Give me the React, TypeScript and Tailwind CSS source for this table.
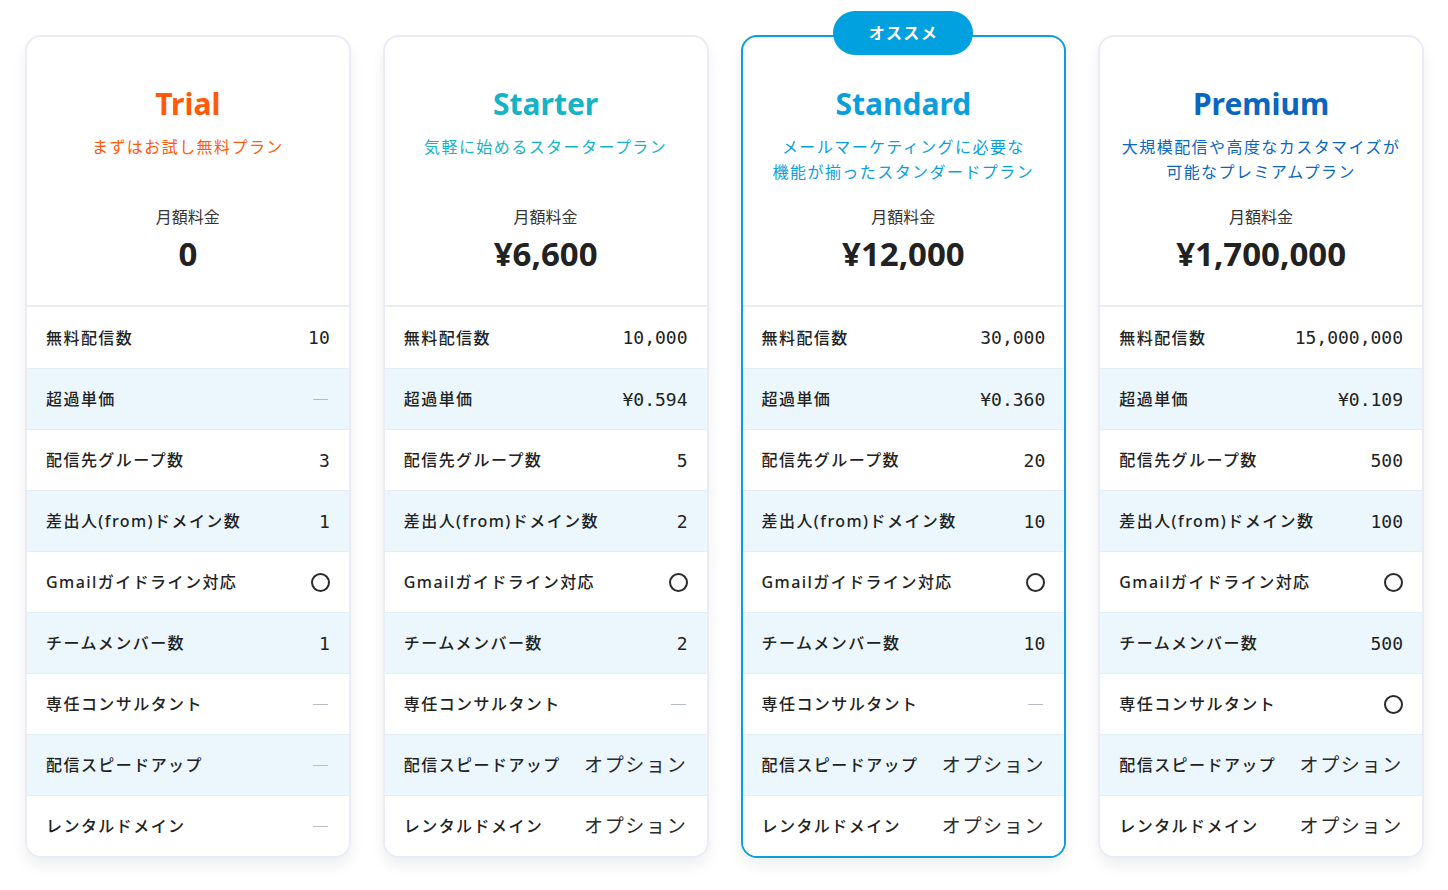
import React from "react";

type Value = string | "dash" | "circle" | "option";

type Plan = {
  name: string;
  color: string;
  subtitle: string[];
  price: string;
  featured?: boolean;
  values: Value[];
};

const labels = [
  "無料配信数",
  "超過単価",
  "配信先グループ数",
  "差出人(from)ドメイン数",
  "Gmailガイドライン対応",
  "チームメンバー数",
  "専任コンサルタント",
  "配信スピードアップ",
  "レンタルドメイン",
];

const plans: Plan[] = [
  {
    name: "Trial",
    color: "text-[#ff5a0a]",
    subtitle: ["まずはお試し無料プラン"],
    price: "0",
    values: ["10", "dash", "3", "1", "circle", "1", "dash", "dash", "dash"],
  },
  {
    name: "Starter",
    color: "text-[#16b2c6]",
    subtitle: ["気軽に始めるスタータープラン"],
    price: "¥6,600",
    values: ["10,000", "¥0.594", "5", "2", "circle", "2", "dash", "option", "option"],
  },
  {
    name: "Standard",
    color: "text-[#0a9fdc]",
    subtitle: ["メールマーケティングに必要な", "機能が揃ったスタンダードプラン"],
    price: "¥12,000",
    featured: true,
    values: ["30,000", "¥0.360", "20", "10", "circle", "10", "dash", "option", "option"],
  },
  {
    name: "Premium",
    color: "text-[#0a66bf]",
    subtitle: ["大規模配信や高度なカスタマイズが", "可能なプレミアムプラン"],
    price: "¥1,700,000",
    values: ["15,000,000", "¥0.109", "500", "100", "circle", "500", "circle", "option", "option"],
  },
];

function Cell({ value }: { value: Value }) {
  if (value === "dash") {
    return <span className="mr-[2px] block h-px w-[15px] bg-[#b8bcc6]" />;
  }
  if (value === "circle") {
    return <span className="block h-[19px] w-[19px] rounded-full border-[2px] border-[#2a2a2a]" />;
  }
  if (value === "option") {
    return <span className="text-[19px] tracking-[0.09em] text-[#2a2a2a]">オプション</span>;
  }
  return (
    <span className="font-['DejaVu_Sans_Mono','Liberation_Mono',monospace] text-[18px] text-[#222]">
      {value}
    </span>
  );
}

function PlanCard({ plan }: { plan: Plan }) {
  return (
    <div className="relative">
      {plan.featured && (
        <div className="absolute -top-[24px] left-1/2 z-10 flex h-[44px] w-[140px] -translate-x-1/2 items-center justify-center rounded-full bg-[#00a1de] text-[16px] font-bold tracking-[0.08em] text-white">
          オススメ
        </div>
      )}
      <div
        className={`overflow-hidden rounded-[16px] border-2 bg-white shadow-[0_8px_14px_rgba(20,30,60,0.07)] ${
          plan.featured ? "border-[#0a9fdc]" : "border-[#e9ecf4]"
        }`}
      >
        <div className="flex flex-col items-center border-b-2 border-[#e9ecf4] pt-[47px] pb-[31px] text-center">
          <h3 className={`text-[30px] leading-[40px] font-bold ${plan.color}`}>{plan.name}</h3>
          <div className={`mt-[11px] min-h-[50px] text-[16px] leading-[25px] tracking-[0.09em] ${plan.color}`}>
            {plan.subtitle.map((line) => (
              <p key={line}>{line}</p>
            ))}
          </div>
          <p className="mt-[20px] text-[16px] leading-[24px] text-[#333]">月額料金</p>
          <p className="mt-[5px] text-[33px] leading-[40px] font-bold text-[#222]">{plan.price}</p>
        </div>
        {labels.map((label, i) => (
          <div
            key={label}
            className={`flex h-[61px] items-center justify-between px-[19px] ${
              i > 0 ? "border-t border-[#e6edf4]" : ""
            } ${i % 2 === 1 ? "bg-[#ebf6fd]" : "bg-white"}`}
          >
            <span className="text-[16px] font-medium tracking-[0.09em] text-[#222]">{label}</span>
            <Cell value={plan.values[i]} />
          </div>
        ))}
      </div>
    </div>
  );
}

export default function App() {
  return (
    <div className="min-h-[890px] bg-white font-['Noto_Sans','Noto_Sans_CJK_JP',sans-serif]">
      <div className="grid grid-cols-4 gap-[32px] pt-[35px] pr-[24px] pb-[32px] pl-[25px]">
        {plans.map((plan) => (
          <PlanCard key={plan.name} plan={plan} />
        ))}
      </div>
    </div>
  );
}
